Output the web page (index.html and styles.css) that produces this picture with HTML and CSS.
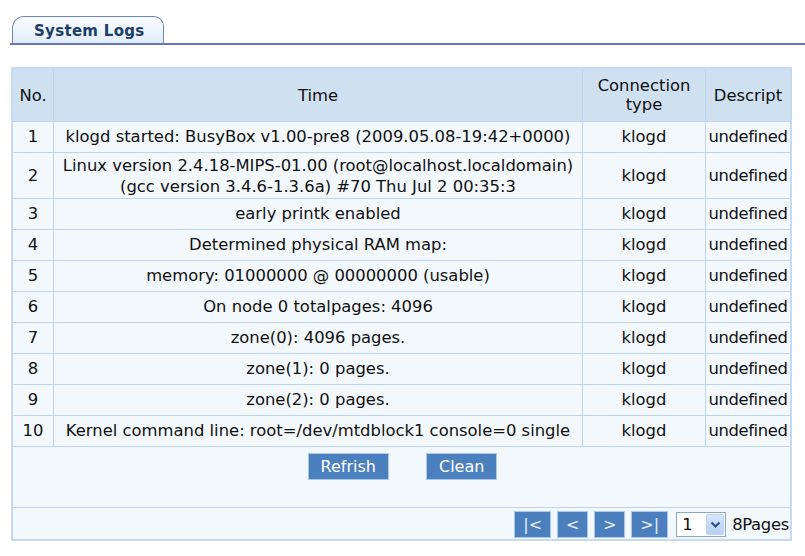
FILE: index.html
```html
<!DOCTYPE html>
<html>
<head>
<meta charset="utf-8">
<link rel="stylesheet" href="styles.css">
</head>
<body>
<div class="page">
  <div class="tabbar">
    <div class="tab">System Logs</div>
  </div>
  <table class="logs">
    <thead>
      <tr>
        <th class="c-no">No.</th>
        <th class="c-time">Time</th>
        <th class="c-conn">Connection<br>type</th>
        <th class="c-desc">Descript</th>
      </tr>
    </thead>
    <tbody>
      <tr><td>1</td><td>klogd started: BusyBox v1.00-pre8 (2009.05.08-19:42+0000)</td><td>klogd</td><td class="d">undefined</td></tr>
      <tr class="tall"><td>2</td><td>Linux version 2.4.18-MIPS-01.00 (root@localhost.localdomain)<br>(gcc version 3.4.6-1.3.6a) #70 Thu Jul 2 00:35:3</td><td>klogd</td><td class="d">undefined</td></tr>
      <tr><td>3</td><td>early printk enabled</td><td>klogd</td><td class="d">undefined</td></tr>
      <tr><td>4</td><td>Determined physical RAM map:</td><td>klogd</td><td class="d">undefined</td></tr>
      <tr><td>5</td><td>memory: 01000000 @ 00000000 (usable)</td><td>klogd</td><td class="d">undefined</td></tr>
      <tr><td>6</td><td>On node 0 totalpages: 4096</td><td>klogd</td><td class="d">undefined</td></tr>
      <tr><td>7</td><td>zone(0): 4096 pages.</td><td>klogd</td><td class="d">undefined</td></tr>
      <tr><td>8</td><td>zone(1): 0 pages.</td><td>klogd</td><td class="d">undefined</td></tr>
      <tr><td>9</td><td>zone(2): 0 pages.</td><td>klogd</td><td class="d">undefined</td></tr>
      <tr><td>10</td><td>Kernel command line: root=/dev/mtdblock1 console=0 single</td><td>klogd</td><td class="d">undefined</td></tr>
      <tr class="actions">
        <td colspan="4">
          <div class="btns">
            <button class="btn">Refrish</button>
            <button class="btn">Clean</button>
          </div>
        </td>
      </tr>
      <tr class="pager-row">
        <td colspan="4">
          <div class="pager">
            <button class="pbtn pw">|&lt;</button>
            <button class="pbtn">&lt;</button>
            <button class="pbtn">&gt;</button>
            <button class="pbtn pw">&gt;|</button>
            <div class="select">
              <span class="sel-val">1</span>
              <span class="sel-arrow"><svg width="11" height="8" viewBox="0 0 11 8"><path d="M1.5 1.5 L5.5 5.5 L9.5 1.5" fill="none" stroke="#2b4f8c" stroke-width="2.2"/></svg></span>
            </div>
            <span class="pages">8Pages</span>
          </div>
        </td>
      </tr>
    </tbody>
  </table>
</div>
</body>
</html>
```

FILE: styles.css
```css
html, body {
  margin: 0;
  padding: 0;
  background: #ffffff;
}
body {
  font-family: "DejaVu Sans", Verdana, sans-serif;
  font-size: 16.4px;
  color: #111;
}
.page {
  padding: 16px 0 0 10px;
}
.tabbar {
  display: flex;
  border-bottom: 2px solid #6277bd;
  height: 27px;
}
.tab {
  margin-left: 2px;
  width: 152px;
  height: 27px;
  box-sizing: border-box;
  border: 1px solid #6f86c6;
  border-bottom: none;
  border-radius: 12px 10px 0 0;
  background: linear-gradient(#fafdff, #e2edf9);
  color: #1e3c68;
  font-weight: bold;
  font-size: 15px;
  line-height: 28px;
  padding-left: 21px;
  margin-bottom: -1px;
  letter-spacing: 0.3px;
}
.logs {
  margin-top: 22px;
  margin-left: 1px;
  width: 781px;
  border-collapse: collapse;
  border: 2px solid #c6dbf1;
  background: #f3f8fd;
  font-size: 16.4px;
}
.logs th, .logs td {
  border: 1px solid #bcd5ee;
  text-align: center;
  padding: 0;
  font-weight: normal;
  white-space: nowrap;
}
.logs th {
  background: #cfe0f1;
  height: 52px;
  line-height: 19px;
}
.c-no { width: 40px; }
.c-conn { width: 122px; }
.c-desc { width: 84px; }
.logs td {
  height: 30px;
  line-height: 18px;
}
.logs tr.tall td {
  height: 45px;
  line-height: 21px;
}
.logs td.d {
  letter-spacing: -0.4px;
}
.logs tr.actions td {
  height: 60px;
  vertical-align: top;
}
.btns {
  display: flex;
  justify-content: center;
  gap: 37px;
  padding-top: 6px;
  padding-left: 2px;
}
.btn {
  font-family: "DejaVu Sans", Verdana, sans-serif;
  font-size: 16px;
  color: #fff;
  background: #4b7fbd;
  border: 1px solid #a9c8ec;
  height: 27px;
  padding: 0 12px;
  margin: 0;
}
.logs tr.pager-row td {
  height: 31px;
  vertical-align: bottom;
}
.pager {
  display: flex;
  justify-content: flex-end;
  align-items: center;
  gap: 6px;
  padding-right: 1px;
  padding-bottom: 1px;
}
.pbtn {
  font-family: "DejaVu Sans", Verdana, sans-serif;
  font-size: 16px;
  color: #e8f0fa;
  background: #4b7fbd;
  border: 1px solid #a9c8ec;
  width: 31px;
  height: 27px;
  padding: 0;
  margin: 0;
}
.pbtn.pw { width: 37px; }
.select {
  margin-left: 2px;
  display: flex;
  align-items: center;
  width: 50px;
  height: 25px;
  box-sizing: border-box;
  border: 1px solid #8aa6c8;
  background: #fff;
}
.sel-val {
  flex: 1;
  padding-left: 5px;
  text-align: left;
}
.sel-arrow {
  width: 18px;
  height: 21px;
  margin-right: 1px;
  background: linear-gradient(#d7e5fb, #b7cff4);
  border: 1px solid #c2d4f0;
  box-sizing: border-box;
  display: flex;
  align-items: center;
  justify-content: center;
  border-radius: 2px;
}
.pages {
  letter-spacing: -0.3px;
}
```
